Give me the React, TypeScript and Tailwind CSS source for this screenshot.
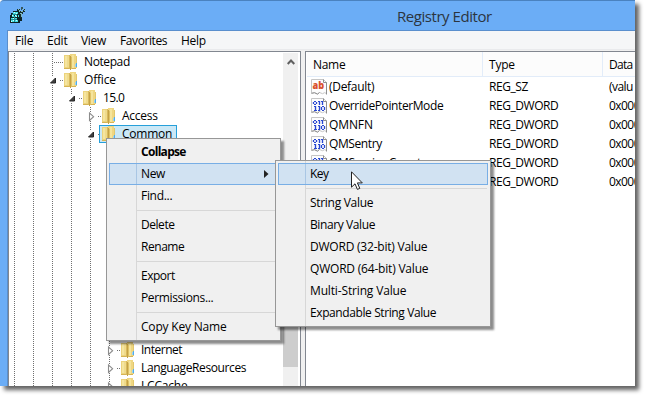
import React from "react";

const dotsV = "bg-[linear-gradient(to_bottom,#707070_50%,transparent_50%)] bg-[length:1px_2px]";
const dotsH = "bg-[linear-gradient(to_right,#707070_50%,transparent_50%)] bg-[length:2px_1px]";

function Folder() {
  return (
    <svg width="14" height="16" viewBox="0 0 14 16" className="shrink-0" shapeRendering="crispEdges">
      <path d="M0 1h6v13H0z" fill="#ecd37c" />
      <path d="M1 2h2v11H1z" fill="#f5e5a0" />
      <path d="M3 2h2v11H3z" fill="#f0db8c" />
      <path d="M6 0h6v14H6z" fill="#efd681" />
      <path d="M8 1h2v13H8z" fill="#f5e49c" />
      <path d="M5 1h1v14H5z" fill="#d9ba5c" />
      <path d="M6 2h1v14H6z" fill="#c4a145" />
      <path d="M7 3h1v12H7z" fill="#dfc265" />
      <path d="M12 2h1v12H12z" fill="#e2c76c" />
      <path d="M0 14h5v1H0zM8 14h4v1H8z" fill="#d6b454" />
      <path d="M12 9h1v4H12z" fill="#4facec" />
      <path d="M11 10h1v3H11z" fill="#9fd3ee" />
    </svg>
  );
}

type NodeKind = "leaf" | "open" | "closed";

function Joint({ kind }: { kind: NodeKind }) {
  if (kind === "leaf") {
    return (
      <div className="flex h-[18px] w-3 shrink-0 items-center">
        <div className={`h-[18px] w-px ${dotsV}`} />
        <div className={`ml-px h-px w-[10px] ${dotsH}`} />
      </div>
    );
  }
  return (
    <div className="flex h-[18px] w-3 shrink-0 items-center">
      <svg width="12" height="18" viewBox="0 0 12 18" className="overflow-visible">
        <path d="M.5 0v5M.5 14v4" stroke="#707070" strokeDasharray="1 1" />
        <path d="M8 9.5h4" stroke="#707070" strokeDasharray="1 1" />
        {kind === "open" ? (
          <path d="M3.5 7v5h-5z" fill="#404040" stroke="#262626" strokeWidth="1" />
        ) : (
          <path d="M-.5 6v7.4L3.6 9.7z" fill="#fff" stroke="#8c8c8c" strokeWidth="1.1" />
        )}
      </svg>
    </div>
  );
}

function Guides({ n }: { n: number }) {
  return (
    <>
      {Array.from({ length: n }, (_, i) => (
        <div key={i} className="h-full w-[19px] shrink-0">
          <div className={`h-full w-px ${dotsV}`} />
        </div>
      ))}
    </>
  );
}

function TreeRow({
  level,
  kind,
  label,
  cls,
  selected,
}: {
  level: number;
  kind: NodeKind;
  label: string;
  cls: string;
  selected?: boolean;
}) {
  return (
    <div className="flex h-[18px] shrink-0 items-center pl-[5px]">
      <Guides n={level} />
      <Joint kind={kind} />
      <div
        className={
          selected
            ? "-ml-[3px] flex h-[18px] w-[78px] items-center border border-[#26a0da] bg-[#cbe8f6] pl-[2px]"
            : "flex h-[18px] items-center"
        }
      >
        <Folder />
        <span className={`ml-[6px] whitespace-nowrap ${cls}`}>{label}</span>
      </div>
    </div>
  );
}

function ValueIcon({ text }: { text?: boolean }) {
  return (
    <svg width="16" height="16" viewBox="0 0 16 16" className="shrink-0">
      <path d="M.5.5h12l3 3v11l-2-.8-2 1-3-1.2-2 1.6-3-1.4-3 .6z" fill="#fdfdfd" stroke="#c6c6c6" />
      <path d="M12.5.5v3h3M15.5 3.5v12M.5 14.3l3-.6 3 1.4 2-1.6" fill="none" stroke="#8f8f8f" />
      {text ? (
        <text
          x="1.6"
          y="10.3"
          fontSize="11"
          fontWeight="800"
          fill="#d9512c"
          textLength="11.6"
          lengthAdjust="spacingAndGlyphs"
          fontFamily="Open Sans, sans-serif"
        >
          ab
        </text>
      ) : (
        <g fill="#2a49d2" shapeRendering="crispEdges">
          <path d="M3 3h2v1H3zM2 4h1v2H2zM5 4h1v2H5zM3 6h2v1H3z" />
          <path d="M7 3h2v1H7zM8 4h1v3H8zM10 3h2v1h-2zM11 4h1v3h-1z" />
          <path d="M3 8h2v1H3zM4 9h1v3H4zM3 12h3v1H3zM7 8h2v1H7zM8 9h1v3H8zM7 12h2v1H7z" />
          <path d="M11 8h2v1h-2zM10 9h1v3h-1zM13 9h1v3h-1zM11 12h2v1h-2z" />
        </g>
      )}
      {!text && (
        <path
          d="M2.500 4v2M5.500 4v2M8.500 3v4M11.500 3v4M4.500 8v5M8.500 8v5M10.500 9v3M13.500 9v3"
          stroke="#2a49d2"
          strokeWidth="1.500"
          strokeOpacity=".7"
        />
      )}
    </svg>
  );
}

function ValueRow({ name, type, data, cls, text }: { name: string; type: string; data: string; cls: string; text?: boolean }) {
  return (
    <div className="flex h-[19px] shrink-0 items-center whitespace-nowrap pl-[5px]">
      <ValueIcon text={text} />
      <span className={`w-[162px] shrink-0 pl-[2px] ${cls}`}>{name}</span>
      <span className="w-[120px] shrink-0 tracking-[-0.45px]">{type}</span>
      <span className="shrink-0 tracking-[-0.55px]">{data}</span>
    </div>
  );
}

function Item({ label, cls, hot, arrow }: { label: string; cls: string; hot?: boolean; arrow?: boolean }) {
  return (
    <div
      className={`mx-[2px] flex h-[22px] items-center justify-between border ${
        hot ? "border-[#78aee5] bg-[#d1e2f2]" : "border-transparent"
      }`}
    >
      <div className={`ml-[26px] flex h-full items-center border-l pl-1 ${hot ? "border-[#a9c6e4]" : "border-transparent"}`}>
        <span className={`whitespace-nowrap ${cls}`}>{label}</span>
      </div>
      {arrow && (
        <svg width="5" height="8" viewBox="0 0 5 8" className="mr-[8px]">
          <path d="M0 0v8l4.500-4z" fill="#222" />
        </svg>
      )}
    </div>
  );
}

function Separator() {
  return (
    <div className="flex h-[7px] items-center pl-[30px] pr-[3px]">
      <div className="h-px w-full bg-[#d7d7d7]" />
    </div>
  );
}

const menuBg =
  "border border-[#979797] bg-[#f0f0f0] bg-[linear-gradient(to_right,transparent_29px,#d7d7d7_29px,#d7d7d7_30px,transparent_30px)] bg-no-repeat py-[2px]";

function RegeditIcon() {
  return (
    <svg width="17" height="17" viewBox="0 0 17 17" className="shrink-0" shapeRendering="crispEdges">
      <path d="M2 6h2V4h7v2h2v8h-2v2H1V8h1z" fill="#0c2426" />
      <path d="M4 5h5v2H4zM3 8h2v2H3zM6 8h2v2H6zM2 11h3v1H2zM6 11h2v1H6zM2 13h3v2H2zM6 13h3v2H6zM9 8h1v2H9z" fill="#45dfe2" />
      <path d="M3 7h5v1H3zM5 9h1v3H5zM2 12h6v1H2zM5 13h1v2H5z" fill="#1d8f94" />
      <path d="M5 5h1v1H5zM7 6h1v1H7zM3 8h1v1H3zM7 9h1v1H7zM4 11h1v1H4zM2 14h1v1H2zM4 13h1v1H4zM7 13h1v1H7zM6 8h1v1H6z" fill="#d8ffff" />
      <path d="M8 2h3v2h3V2h2v3h-2v2h-1v4h-2V8H9V6h1V4H8z" fill="#142c2e" />
      <path d="M9 2h1v1H9zM10 3h1v2h-1zM12 4h2v1h-2zM14 2h1v1h-1zM15 3h1v1h-1zM11 6h2v1h-2zM12 7h1v3h-1z" fill="#7fb9bd" />
      <path d="M12 0h2v2h-1v1h-1z" fill="#35575c" />
    </svg>
  );
}

export default function App() {
  return (
    <div className="relative h-[401px] w-[650px] overflow-hidden bg-white font-['Open_Sans','Noto_Sans',sans-serif] text-[12px] leading-[18px] text-black">
      <div className="h-[386px] w-[635px] rounded-tl-[4px] shadow-[4px_4px_4px_rgba(0,0,0,0.62)]">
        <div className="flex h-full w-full flex-col overflow-hidden rounded-tl-[4px] border-t border-t-[#4a82bf] bg-[#6badf6]">
          <header className="flex h-[29px] shrink-0 items-center pl-[9px]">
            <RegeditIcon />
            <h1 className="ml-[371px] whitespace-nowrap text-[15px] tracking-[-0.45px] text-[#2b3540]">Registry Editor</h1>
          </header>
          <div className="ml-[7px] flex min-h-0 flex-1 flex-col border-l border-t border-[#5a8fcd] bg-[#f0f0f0]">
            <nav className="flex h-[19px] shrink-0 items-center border-b border-[#e9eaec] bg-[#f5f6f7] pl-[7px] pt-px">
              <span className="w-8 tracking-[-0.2px]">File</span>
              <span className="w-[34px] tracking-[-0.2px]">Edit</span>
              <span className="w-[39px] tracking-[-0.3px]">View</span>
              <span className="w-[61px] tracking-[-0.4px]">Favorites</span>
              <span className="tracking-[-0.3px]">Help</span>
            </nav>
            <div className="mt-px flex min-h-0 flex-1">
              <section className="flex w-[293px] shrink-0 border border-b-0 border-[#828790] bg-white pr-[2px]">
                <div className="flex min-w-0 flex-1 flex-col overflow-hidden pt-px">
                  <TreeRow level={2} kind="leaf" label="Notepad" cls="tracking-[-0.4px]" />
                  <TreeRow level={2} kind="open" label="Office" cls="tracking-[-0.2px]" />
                  <TreeRow level={3} kind="open" label="15.0" cls="tracking-[-0.6px]" />
                  <TreeRow level={4} kind="closed" label="Access" cls="tracking-[-0.25px]" />
                  <TreeRow level={4} kind="open" label="Common" cls="tracking-[-0.25px]" selected />
                  <div className="flex h-[198px] shrink-0 pl-[5px]">
                    <Guides n={6} />
                  </div>
                  <TreeRow level={5} kind="closed" label="Internet" cls="tracking-[-0.5px]" />
                  <TreeRow level={5} kind="closed" label="LanguageResources" cls="tracking-[-0.38px]" />
                  <TreeRow level={5} kind="closed" label="LCCache" cls="tracking-[-0.2px]" />
                </div>
                <div className="mt-px flex w-[15px] shrink-0 flex-col bg-[#f0f0f0]">
                  <div className="flex h-[17px] items-center justify-center">
                    <svg width="8" height="6" viewBox="0 0 8 6">
                      <path d="M.7 5L4 1.500 7.300 5" fill="none" stroke="#606060" strokeWidth="2" />
                    </svg>
                  </div>
                  <div className="mt-[200px] h-[97px] bg-[#cdcdcd]" />
                </div>
              </section>
              <section className="ml-1 flex min-w-0 flex-1 flex-col overflow-hidden border-l border-t border-[#828790] bg-white">
                <div className="ml-px flex h-[25px] shrink-0 items-center border-b border-[#e2ecf9] bg-[#fcfcfc]">
                  <span className="flex h-full w-[176px] shrink-0 items-center border-r border-[#e2ecf9] pl-[6px] pt-[2px] tracking-[-0.3px]">
                    Name
                  </span>
                  <span className="flex h-full w-[120px] shrink-0 items-center border-r border-[#e2ecf9] pl-[6px] pt-[2px] tracking-[-0.2px]">
                    Type
                  </span>
                  <span className="flex h-full items-center pl-[6px] pt-[2px] tracking-[-0.75px]">Data</span>
                </div>
                <ValueRow text name="(Default)" type="REG_SZ" data="(valu" cls="tracking-[-0.3px]" />
                <ValueRow name="OverridePointerMode" type="REG_DWORD" data="0x000" cls="tracking-[-0.4px]" />
                <ValueRow name="QMNFN" type="REG_DWORD" data="0x000" cls="tracking-[-0.1px]" />
                <ValueRow name="QMSentry" type="REG_DWORD" data="0x000" cls="tracking-[-0.4px]" />
                <ValueRow name="QMSessionCount" type="REG_DWORD" data="0x000" cls="tracking-[-0.3px]" />
                <ValueRow name="" type="REG_DWORD" data="0x000" cls="" />
              </section>
            </div>
          </div>
        </div>
      </div>

      <div className={`absolute left-[106px] top-[138px] w-[175px] shadow-[3px_3px_2px_rgba(0,0,0,0.45)] ${menuBg}`}>
        <Item label="Collapse" cls="font-bold tracking-[-0.7px]" />
        <Item label="New" cls="tracking-[-0.4px]" hot arrow />
        <Item label="Find..." cls="tracking-[-0.3px]" />
        <Separator />
        <Item label="Delete" cls="tracking-[-0.45px]" />
        <Item label="Rename" cls="tracking-[-0.45px]" />
        <Separator />
        <Item label="Export" cls="tracking-[-0.5px]" />
        <Item label="Permissions..." cls="tracking-[-0.35px]" />
        <Separator />
        <Item label="Copy Key Name" cls="tracking-[-0.2px]" />
      </div>

      <div className={`absolute left-[275px] top-[160px] w-[216px] shadow-[3px_3px_2px_rgba(0,0,0,0.45)] ${menuBg}`}>
        <Item label="Key" cls="tracking-[-0.5px]" hot />
        <Separator />
        <Item label="String Value" cls="tracking-[-0.3px]" />
        <Item label="Binary Value" cls="tracking-[-0.4px]" />
        <Item label="DWORD (32-bit) Value" cls="tracking-[-0.22px]" />
        <Item label="QWORD (64-bit) Value" cls="tracking-[-0.2px]" />
        <Item label="Multi-String Value" cls="tracking-[-0.15px]" />
        <Item label="Expandable String Value" cls="tracking-[-0.4px]" />
      </div>

      <svg width="13" height="20" viewBox="0 0 13 20" className="absolute left-[351px] top-[171px]">
        <path d="M.5.8v15.400l3.500-3.400 2.400 5.600 2.400-1-2.400-5.500h4.900z" fill="#fff" stroke="#222" strokeWidth="1" />
      </svg>
    </div>
  );
}
